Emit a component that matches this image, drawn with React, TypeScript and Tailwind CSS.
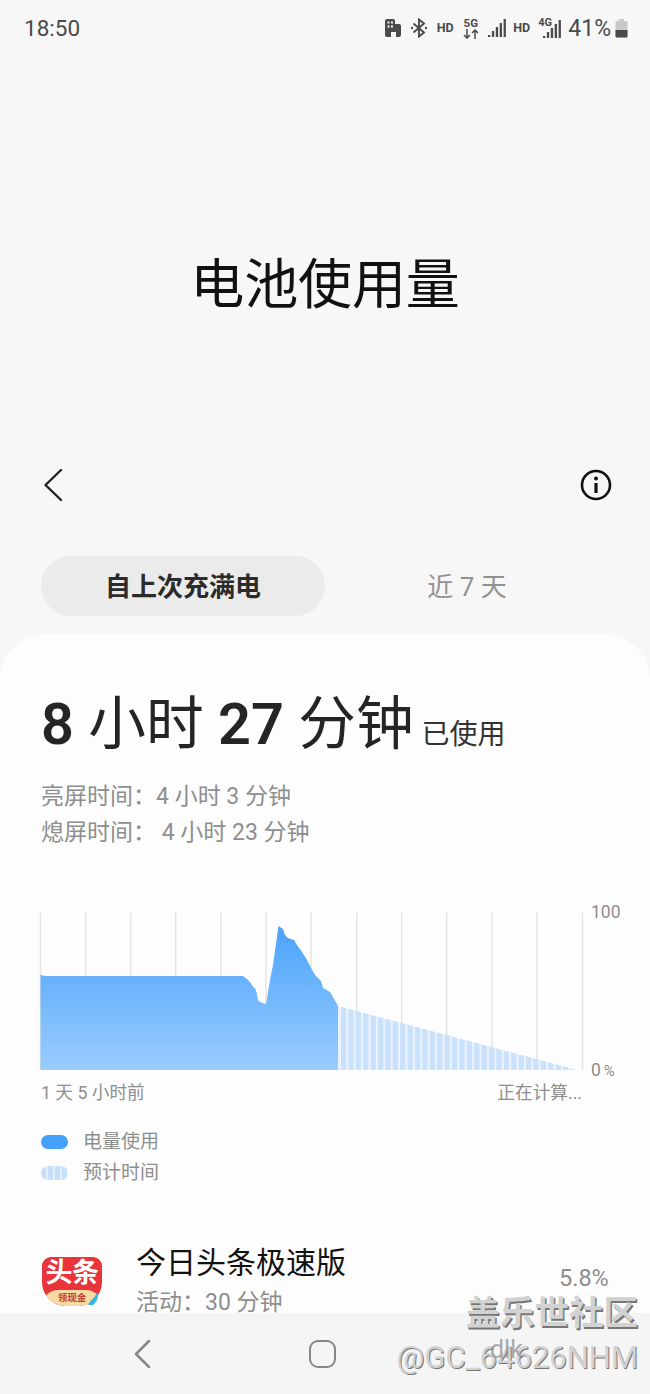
const SANS = `font-['Roboto','Noto_Sans_CJK_SC',sans-serif]`;

function Bars({ heights }: { heights: number[] }) {
  const step = 3.9;
  return (
    <svg width={heights.length * step} height="20" viewBox={`0 0 ${heights.length * step} 20`} fill="#4b4b4b">
      {heights.map((h, i) => (
        <rect key={i} x={i * step} y={19 - h} width="2.3" height={h} />
      ))}
    </svg>
  );
}

function StatusBar() {
  return (
    <div className="flex h-[56px] items-center justify-between pl-[24px] pr-[21px] text-[#4a4a4a]">
      <span className="text-[22.500px] leading-none">18:50</span>
      <div className="flex items-center">
        <svg width="18" height="20" viewBox="0 0 18 20" fill="#4a4a4a" className="mr-[8px]">
          <path d="M1 3a2 2 0 0 1 2-2h6a2 2 0 0 1 2 2v3h4a2 2 0 0 1 2 2v9a2 2 0 0 1-2 2h-3v-5H7v5H3a2 2 0 0 1-2-2z" />
          <rect x="3.5" y="3.5" width="2" height="2" fill="#f7f7f7" />
          <rect x="7" y="3.5" width="2" height="2" fill="#f7f7f7" />
          <rect x="3.5" y="7.5" width="2" height="2" fill="#f7f7f7" />
          <rect x="7" y="7.5" width="2" height="2" fill="#f7f7f7" />
        </svg>
        <svg width="18" height="20" viewBox="0 0 18 20" fill="none" stroke="#4a4a4a" strokeWidth="1.9" className="mr-[9px]">
          <path d="M3.5 5.5 14 14.5 9 18.5V1.5l5 4L3.500 14.500" />
          <circle cx="2" cy="10" r="1.200" fill="#4a4a4a" stroke="none" />
          <circle cx="16" cy="10" r="1.200" fill="#4a4a4a" stroke="none" />
        </svg>
        <span className="mr-[7px] w-[18px] text-[12.500px] leading-none font-bold">HD</span>
        <div className="mr-[8px] flex w-[18px] flex-col items-center">
          <span className="text-[11.500px] leading-[11px] font-bold">5G</span>
          <svg width="16" height="10" viewBox="0 0 16 10" fill="none" stroke="#4a4a4a" strokeWidth="1.500">
            <path d="M4 0v9M1 6l3 3 3-3M12 10V1M9 4l3-3 3 3" />
          </svg>
        </div>
        <div className="mr-[6px]"><Bars heights={[2, 6, 10, 14, 18]} /></div>
        <span className="mr-[7px] w-[18px] text-[12.500px] leading-none font-bold">HD</span>
        <div className="relative mr-[6px] h-[22px] w-[24px]">
          <span className="absolute left-0 top-0 text-[11px] leading-none font-bold">4G</span>
          <div className="absolute bottom-0 left-[5px]"><Bars heights={[2, 6, 10, 14, 18]} /></div>
        </div>
        <span className="mr-[3px] text-[23px] leading-none">41%</span>
        <svg width="15" height="20" viewBox="0 0 13 20">
          <path d="M4 1h5v2h2a1.500 1.500 0 0 1 1.500 1.500V18a1.500 1.500 0 0 1-1.500 1.500H2A1.500 1.500 0 0 1 .5 18V4.500A1.500 1.500 0 0 1 2 3h2z" fill="#c9c9c9" />
          <path d="M.5 12h12v6a1.500 1.500 0 0 1-1.500 1.500H2A1.500 1.500 0 0 1 .5 18z" fill="#4a4a4a" />
        </svg>
      </div>
    </div>
  );
}

const used: [number, number][] = [
  [40.5, 975], [46, 976], [243, 976], [247, 979], [250, 982], [253, 987], [255, 988], [257, 994], [258, 1000],
  [260, 1002], [266, 1004], [270, 980], [273, 965], [278.500, 926], [283, 929], [285, 935], [288, 938], [294, 940],
  [297, 945], [302, 952], [307, 960], [311, 968], [315, 975], [321, 981], [323, 988], [330, 992], [333, 997], [338, 1006],
];
const gridXs = [40.5, 85.7, 130.7, 175.7, 221, 266, 311, 356.7, 401.7, 446.7, 492, 537, 582.5];
const stripeXs = Array.from({ length: 33 }, (_, i) => 339 + i * 7.4);

function Chart() {
  const usedPts = used.map((p) => p.join(",")).join(" ");
  return (
    <svg width="546" height="160" viewBox="41 912 546 160" className="block overflow-visible">
      <defs>
        <linearGradient id="fill" x1="0" y1="926" x2="0" y2="1070" gradientUnits="userSpaceOnUse">
          <stop offset="0" stopColor="#4ba3fb" />
          <stop offset="1" stopColor="#9accfe" />
        </linearGradient>
        <clipPath id="pred">
          <polygon points="338,1006 577,1070 338,1070" />
        </clipPath>
      </defs>
      {gridXs.map((x) => (
        <line key={x} x1={x} x2={x} y1="912.500" y2="1070" stroke="#e4e4e4" strokeWidth="1.500" />
      ))}
      <polygon points={`${usedPts} 338,1070 40.500,1070`} fill="url(#fill)" />
      <g clipPath="url(#pred)">
        <rect x="338" y="1000" width="245" height="70" fill="#dfecfc" fillOpacity="0.7" />
        {stripeXs.map((x) => (
          <rect key={x} x={x + 2} width="5.200" y="1000" height="70" fill="#c6dffb" fillOpacity="0.9" />
        ))}
      </g>
    </svg>
  );
}

function AppIcon() {
  return (
    <div className="relative h-[60px] w-[60px] shrink-0">
      <div className="absolute left-[1px] top-0 flex h-[49px] w-[60px] flex-col items-center overflow-hidden rounded-t-[9px] rounded-b-[24px] bg-[#e8343a]">
        <span className="text-[27px] leading-[33px] font-bold tracking-[-0.5px] text-white">头条</span>
        <div className="flex h-[16px] w-full items-center justify-center rounded-t-[16px] bg-[#f6d9a3]">
          <span className="text-[9.500px] leading-none font-bold text-[#c0402f]">领现金</span>
        </div>
      </div>
      <svg width="12" height="14" viewBox="0 0 12 14" className="absolute left-[46px] top-[35px]">
        <path d="M10 0 C9 5 5 6 1 13 L6 13 C9 10 11 7 11 3z" fill="#2fb6e6" />
      </svg>
    </div>
  );
}

export default function App() {
  return (
    <div className={`${SANS} relative h-[1394px] w-[650px] overflow-hidden bg-[#f7f7f7]`}>
      <StatusBar />

      <div className="flex h-[403px] items-start justify-center pt-[194px]">
        <h1 className="text-[54px] leading-[72px] font-normal tracking-[-0.100px] text-[#111]">电池使用量</h1>
      </div>

      <div className="flex h-[97px] items-start justify-between pl-[41px] pr-[37px] pt-[8px]">
        <svg width="24" height="36" viewBox="0 0 24 36" fill="none" stroke="#222" strokeWidth="2.400" strokeLinecap="round" strokeLinejoin="round">
          <path d="M20 3 4.500 18 20 33" />
        </svg>
        <svg width="34" height="34" viewBox="0 0 34 34" fill="none" className="mt-[1px]">
          <circle cx="17" cy="17" r="14" stroke="#111" strokeWidth="2.600" />
          <circle cx="17" cy="10.500" r="2" fill="#111" />
          <path d="M17 15v10" stroke="#111" strokeWidth="3.200" />
        </svg>
      </div>

      <div className="flex h-[78px] items-start pl-[41px]">
        <div className="flex h-[60px] w-[284px] items-center justify-center rounded-full bg-[#ebebeb] pt-[3px]">
          <span className="text-[26px] font-bold text-[#2b2b2b]">自上次充满电</span>
        </div>
        <div className="flex h-[60px] w-[284px] items-center justify-center pt-[3px]">
          <span className="text-[26px] text-[#929292]">近 7 天</span>
        </div>
      </div>

      <div className="h-[760px] rounded-t-[46px] bg-[#fdfdfd] pl-[41px] pt-[52px]">
        <div className="flex h-[80px] items-baseline text-[#252525]">
          <span className="text-[57.700px] leading-[76px]">
            <b className="font-semibold">8</b> 小时 <b className="font-semibold">27</b> 分钟
          </span>
          <span className="ml-[8px] text-[28px] leading-none text-[#333]">已使用</span>
        </div>
        <div className="mt-[13px] text-[23px] leading-[36px] text-[#8e8e8e]">
          <div>亮屏时间：4 小时 3 分钟</div>
          <div>熄屏时间： 4 小时 23 分钟</div>
        </div>

        <div className="relative mt-[61px]">
          <Chart />
          <span className="absolute left-[550px] top-[-10px] text-[17.500px] leading-[20px] text-[#8e8e8e]">100</span>
          <span className="absolute left-[550px] top-[148px] text-[17.500px] leading-[20px] text-[#8e8e8e]">0<span className="ml-[3px] text-[15px]">%</span></span>
        </div>
        <div className="mt-[9px] flex w-[541px] justify-between text-[17.700px] leading-[24px] text-[#8e8e8e]">
          <span>1 天 5 小时前</span>
          <span>正在计算...</span>
        </div>

        <div className="mt-[25px] flex flex-col gap-[7px] text-[19px] leading-[24px] text-[#8e8e8e]">
          <div className="flex items-center gap-[15px]">
            <span className="h-[14px] w-[27px] rounded-full bg-[#45a0fb]" />
            <span>电量使用</span>
          </div>
          <div className="flex items-center gap-[15px]">
            <span className="h-[14px] w-[27px] rounded-full bg-[repeating-linear-gradient(90deg,#c6dffb_0_5px,#e4effc_5px_7px)]" />
            <span>预计时间</span>
          </div>
        </div>

        <div className="mt-[72px] flex items-start">
          <AppIcon />
          <div className="ml-[35px] flex w-[424px] flex-col">
            <span className="mt-[-14px] text-[30px] leading-[40px] text-[#111]">今日头条极速版</span>
            <span className="mt-[5px] text-[23px] leading-[30px] text-[#8e8e8e]">活动：30 分钟</span>
          </div>
          <span className="ml-[-1px] mt-[6px] text-[23.500px] leading-[30px] text-[#8e8e8e]">5.8%</span>
        </div>
      </div>

      <div className="absolute bottom-0 left-0 flex h-[81px] w-full items-center bg-[#f5f5f5]">
        <svg width="20" height="30" viewBox="0 0 20 30" fill="none" stroke="#868686" strokeWidth="2.500" strokeLinecap="round" strokeLinejoin="round" className="ml-[132px]">
          <path d="M17 2 4 15l13 13" />
        </svg>
        <div className="ml-[157px] h-[28px] w-[27px] rounded-[9px] border-[2.500px] border-[#868686]" />
      </div>

      <div className="absolute right-[12px] top-[1291px] flex flex-col items-end text-[#d2d2d2]">
        <span className="text-[34.500px] leading-[44px] font-bold [text-shadow:1.500px_1.500px_0_#777]">盖乐世社区</span>
        <span className="mt-[1px] text-[31px] leading-[44px] [text-shadow:1px_1px_0_#777]">@GC_64626NHM</span>
      </div>
      <span className="absolute left-[490px] top-[1336px] text-[25px] leading-[28px] text-[#8b8b8b] opacity-70">dlk</span>
    </div>
  );
}
